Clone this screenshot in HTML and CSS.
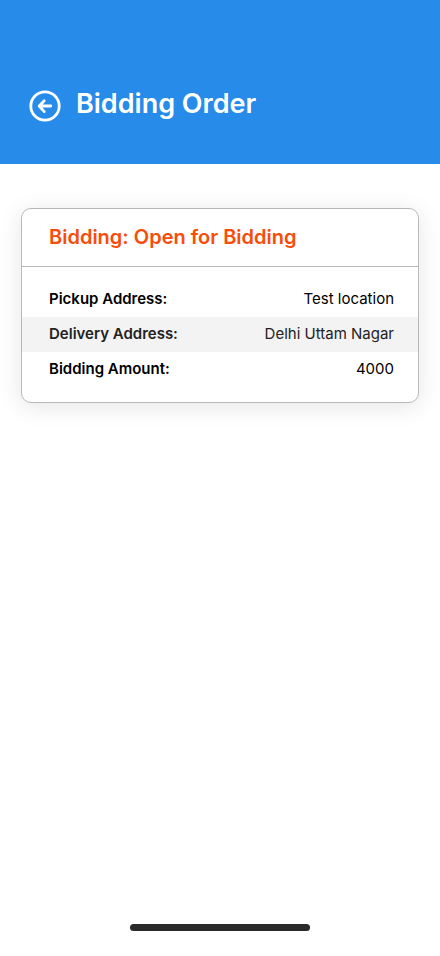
FILE: index.html
```html
<!DOCTYPE html>
<html lang="en">
<head>
<meta charset="utf-8">
<meta name="viewport" content="width=device-width, initial-scale=1">
<title>Bidding Order</title>
<link rel="stylesheet" href="styles.css">
</head>
<body>
<header class="topbar">
  <button class="back" type="button" aria-label="Back">
    <svg viewBox="0 0 32 32" width="32" height="32" fill="none" stroke="currentColor" stroke-width="2.8" stroke-linecap="round" stroke-linejoin="round" aria-hidden="true">
      <circle cx="16" cy="16" r="14.2"/>
      <path d="M21.8 16H11M15.2 10.8L10.2 16L15.2 21.6"/>
    </svg>
  </button>
  <h1 class="title">Bidding Order</h1>
</header>
<main class="content">
  <section class="card">
    <h2 class="card-title">Bidding: Open for Bidding</h2>
    <dl class="details">
      <div class="row"><dt>Pickup Address:</dt><dd>Test location</dd></div>
      <div class="row row-shaded"><dt>Delivery Address:</dt><dd>Delhi Uttam Nagar</dd></div>
      <div class="row"><dt>Bidding Amount:</dt><dd>4000</dd></div>
    </dl>
  </section>
</main>
<footer class="home"><div class="home-bar"></div></footer>
</body>
</html>
```

FILE: styles.css
```css
* {
  box-sizing: border-box;
}

body {
  margin: 0;
  min-height: 100vh;
  display: flex;
  flex-direction: column;
  background: #fff;
  color: #000;
  font-family: Inter, "Liberation Sans", sans-serif;
}

.topbar {
  display: flex;
  align-items: flex-end;
  gap: 15px;
  padding: 87px 29px 42px;
  background: #278bea;
  color: #fff;
}

.back {
  display: flex;
  padding: 0;
  border: 0;
  background: none;
  color: inherit;
}

.title {
  margin: 0;
  padding-bottom: 1px;
  font-size: 27px;
  line-height: 34px;
  font-weight: 600;
}

.content {
  flex: 1;
  padding: 44px 21px;
}

.card {
  overflow: hidden;
  border: 1px solid #b8b8b8;
  border-radius: 10px;
  background: #fff;
  box-shadow: 0 4px 24px rgba(0, 0, 0, 0.1);
}

.card-title {
  margin: 0;
  padding: 16px 27px;
  border-bottom: 1px solid #b8b8b8;
  color: #f94c08;
  font-size: 20px;
  line-height: 25px;
  font-weight: 600;
}

.details {
  margin: 0;
  padding: 15px 0;
}

.row {
  display: flex;
  justify-content: space-between;
  padding: 0 24px 2px 27px;
  font-size: 15px;
  line-height: 33px;
}

.row-shaded {
  background: #f3f3f3;
  color: #222;
}

.row dt {
  font-weight: 600;
}

.row dd {
  margin: 0;
}

.home {
  display: flex;
  justify-content: center;
  padding-bottom: 25px;
}

.home-bar {
  width: 180px;
  height: 7px;
  border-radius: 4px;
  background: #2b2a2a;
}
```
